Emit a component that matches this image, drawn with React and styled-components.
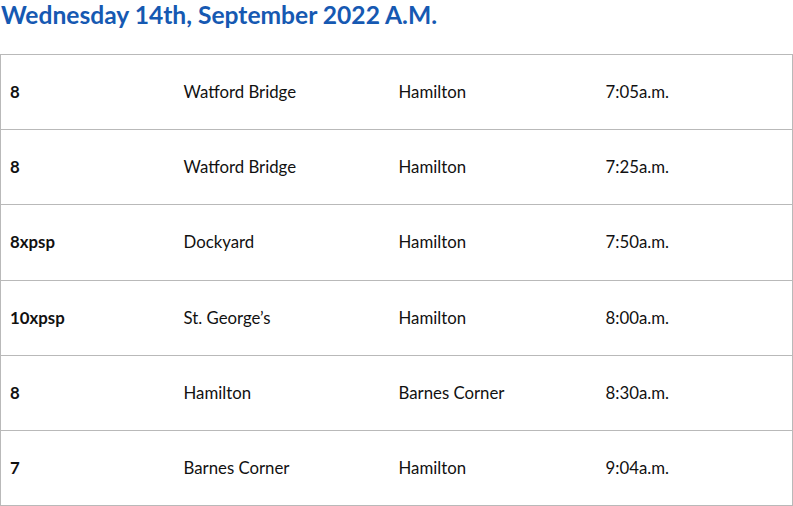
import React from "react";
import styled, { createGlobalStyle } from "styled-components";

const rows = [
  { route: "8", from: "Watford Bridge", to: "Hamilton", time: "7:05a.m." },
  { route: "8", from: "Watford Bridge", to: "Hamilton", time: "7:25a.m." },
  { route: "8xpsp", from: "Dockyard", to: "Hamilton", time: "7:50a.m." },
  { route: "10xpsp", from: "St. George’s", to: "Hamilton", time: "8:00a.m." },
  { route: "8", from: "Hamilton", to: "Barnes Corner", time: "8:30a.m." },
  { route: "7", from: "Barnes Corner", to: "Hamilton", time: "9:04a.m." },
];

function App() {
  return (
    <Page>
      <GlobalStyle />
      <Title>Wednesday 14th, September 2022 A.M.</Title>
      <Table>
        <colgroup>
          <col style={{ width: 174 }} />
          <col style={{ width: 215 }} />
          <col style={{ width: 207 }} />
          <col />
        </colgroup>
        <tbody>
          {rows.map((r, i) => (
            <Row key={i}>
              <Cell bold>{r.route}</Cell>
              <Cell>{r.from}</Cell>
              <Cell>{r.to}</Cell>
              <Cell>{r.time}</Cell>
            </Row>
          ))}
        </tbody>
      </Table>
    </Page>
  );
}

export default App;

const GlobalStyle = createGlobalStyle`
  body {
    margin: 0;
    background: #fff;
    font-family: Lato, "Liberation Sans", sans-serif;
  }
`;

const Page = styled.div`
  width: 793px;
`;

const Title = styled.h2`
  margin: 0;
  padding: 0 0 0 1px;
  height: 54px;
  font-size: 24.6px;
  font-weight: 700;
  line-height: 30px;
  color: #1659b2;
`;

const Table = styled.table`
  width: 793px;
  border-collapse: collapse;
  table-layout: fixed;
`;

const Row = styled.tr`
  height: 75.2px;
`;

const Cell = styled.td`
  border: 1px solid #b9b9b9;
  border-left: ${(p) => (p.bold ? "1px solid #b9b9b9" : "none")};
  border-right: none;
  padding: 0 9px 1px;
  font-size: 16.8px;
  font-weight: ${(p) => (p.bold ? 700 : 400)};
  color: #111;
  vertical-align: middle;
  &:last-child {
    border-right: 1px solid #b9b9b9;
  }
`;
